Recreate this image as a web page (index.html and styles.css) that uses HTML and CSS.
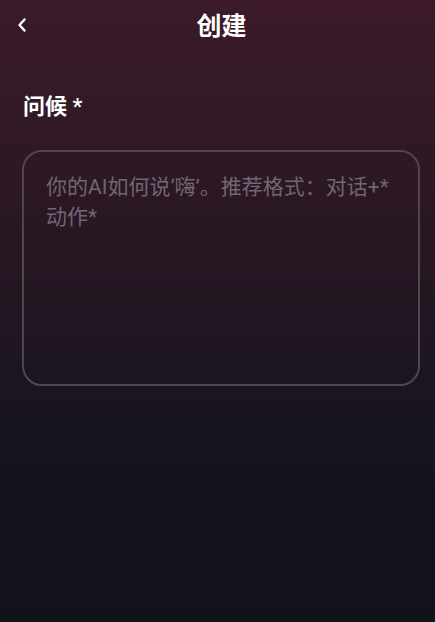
FILE: index.html
```html
<!DOCTYPE html>
<html lang="zh">
<head>
    <meta charset="UTF-8">
    <title>创建</title>
    <link rel="stylesheet" href="styles.css">
</head>
<body>
<div class="page">
    <div class="header">
        <a class="back" href="#">
            <svg width="12" height="16" viewBox="0 0 12 16">
                <path d="M8.5 2.5 L3.5 8 L8.5 13.5" fill="none" stroke="#fff" stroke-width="2.4" stroke-linecap="round" stroke-linejoin="round"/>
            </svg>
        </a>
        <h1 class="title">创建</h1>
    </div>
    <div class="field">
        <label class="label">问候 *</label>
        <div class="textarea">
            <span class="placeholder">你的AI如何说‘嗨’。推荐格式：对话+*动作*</span>
        </div>
    </div>
</div>
</body>
</html>
```

FILE: styles.css
```css
* {
    margin: 0;
    padding: 0;
    box-sizing: border-box;
}

body {
    font-family: Roboto, "Noto Sans CJK SC", sans-serif;
    background-color: #12121b;
    color: #fff;
}

.page {
    min-height: 622px;
    background: linear-gradient(180deg, #3c1a29 0%, #2c1824 30%, #1b1520 62%, #13131c 80%, #12121b 100%);
}

.header {
    height: 52px;
    display: flex;
    align-items: center;
    justify-content: center;
    position: relative;
}

.back {
    position: absolute;
    left: 16px;
    top: 17px;
    display: flex;
}

.title {
    font-size: 25px;
    font-weight: 600;
    line-height: 1;
    margin-left: 8px;
}

.field {
    padding: 40px 15px 0 22px;
}

.label {
    display: block;
    font-size: 22px;
    font-weight: 600;
    line-height: 30px;
    padding-left: 1px;
}

.textarea {
    margin-top: 28px;
    height: 236px;
    border: 2px solid #4f4650;
    border-radius: 20px;
    padding: 20px 22px;
}

.placeholder {
    font-size: 21px;
    line-height: 30px;
    color: #6f6772;
}
```
